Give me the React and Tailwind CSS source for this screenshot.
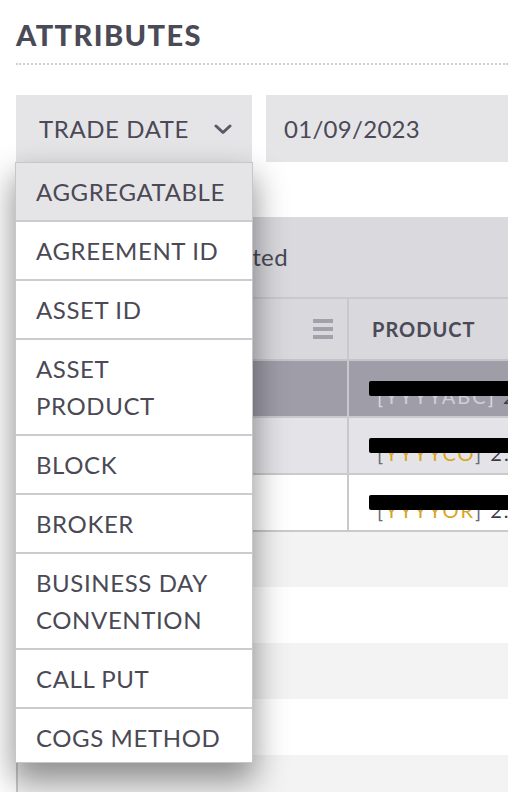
import React from "react";

const items = [
  "AGGREGATABLE",
  "AGREEMENT ID",
  "ASSET ID",
  "ASSET PRODUCT",
  "BLOCK",
  "BROKER",
  "BUSINESS DAY CONVENTION",
  "CALL PUT",
  "COGS METHOD",
];

function Chevron() {
  return (
    <svg width="18" height="12" viewBox="0 0 18 12" className="shrink-0">
      <path d="M2 3 L9 9.5 L16 3" fill="none" stroke="#5a5966" strokeWidth="3" strokeLinecap="round" strokeLinejoin="round" />
    </svg>
  );
}

function Redacted({ bracketColor, textColor, label }) {
  return (
    <div className="relative h-full flex items-center pl-[28px]">
      <div className="text-[20px] mt-[14px] whitespace-nowrap tracking-[2px]" style={{ color: bracketColor }}>
        [<span style={{ color: textColor }}>{label}</span>] <span className="text-[#3a3a44]">2.</span>
      </div>
      <div className="absolute left-[20px] right-[-10px] top-[20px] h-[15px] bg-black rounded-l-[2px] blur-[0.6px]" />
    </div>
  );
}

export default function App() {
  return (
    <div className="relative w-[508px] h-[792px] overflow-hidden bg-white text-[#4a4955] font-['Lato','Liberation_Sans',sans-serif]">
      <div className="pl-4 pt-[18px]">
        <h1 className="text-[29px] font-black leading-[34px] tracking-[1.4px] text-[#4b4a57]">ATTRIBUTES</h1>
      </div>
      <div className="ml-4 mt-[11px] border-b-2 border-dotted border-[#cfcfd4]" />
      <div className="flex ml-4 mt-[30px] gap-[14px]">
        <div className="w-[236px] h-[67px] bg-[#e5e5e8] flex items-center pl-[23px] pr-[20px]">
          <span className="text-[24px] tracking-[0.6px] flex-1">TRADE DATE</span>
          <Chevron />
        </div>
        <div className="flex-1 h-[67px] bg-[#e5e5e8] flex items-center pl-[18px]">
          <span className="text-[24px] tracking-[0.3px]">01/09/2023</span>
        </div>
      </div>

      <div className="ml-4 mt-[55px] border-l-2 border-[#c9c9ce]">
        <div className="h-[80px] bg-[#d9d9de] flex items-center">
          <div className="w-[270px] text-right text-[24px] tracking-[0.4px] text-[#4a4955]">0 rows selected</div>
        </div>
        <div className="h-[2px] bg-[#c9c9cf]" />
        <div className="h-[60px] bg-[#d8d8dd] flex">
          <div className="w-[329px] flex items-center justify-end pr-[14px]">
            <div className="flex flex-col gap-[4px]">
              <div className="w-[20px] h-[4px] bg-[#a2a1ab]" />
              <div className="w-[20px] h-[4px] bg-[#a2a1ab]" />
              <div className="w-[20px] h-[4px] bg-[#a2a1ab]" />
            </div>
          </div>
          <div className="w-[2px] bg-[#c8c8cd]" />
          <div className="flex-1 flex items-center pl-[23px] text-[20px] font-bold tracking-[1px] text-[#4b4a57]">PRODUCT</div>
        </div>
        <div className="h-[2px] bg-[#c4c4ca]" />
        {[
          { bg: "bg-[#9e9da8]", b: "#d8d8de", t: "#cfcfd6", label: "YYYYABC" },
          { bg: "bg-[#e4e4e8]", b: "#6a6a74", t: "#d9a520", label: "YYYYCO" },
          { bg: "bg-white", b: "#6a6a74", t: "#d9a520", label: "YYYYOR" },
        ].map((r, i) => (
          <React.Fragment key={i}>
            <div className={`h-[55px] flex ${r.bg}`}>
              <div className="w-[329px]" />
              <div className="w-[2px] bg-[#c8c8cd]" />
              <div className="flex-1 overflow-hidden">
                <Redacted bracketColor={r.b} textColor={r.t} label={r.label} />
              </div>
            </div>
            <div className="h-[2px] bg-[#c9c9ce]" />
          </React.Fragment>
        ))}
        <div className="h-[55px] bg-[#f3f3f4]" />
        <div className="h-[56px] bg-white" />
        <div className="h-[56px] bg-[#f3f3f4]" />
        <div className="h-[56px] bg-white" />
        <div className="h-[56px] bg-[#f3f3f4]" />
      </div>

      <div className="absolute left-[15px] top-[162px] w-[238px] bg-white border border-[#c6c6cb] shadow-[0_16px_30px_2px_rgba(0,0,0,0.42)]">
        {items.map((it, i) => (
          <div
            key={it}
            className={`pl-[20px] pr-[24px] text-[24px] leading-[37px] tracking-[0.6px] ${i === 0 ? "bg-[#e5e5e8]" : "bg-white"} ${i < items.length - 1 ? "border-b-2 border-[#cbcbd0] py-[10px]" : "pt-[10px] pb-[6px]"}`}
          >
            {it}
          </div>
        ))}
      </div>
    </div>
  );
}
